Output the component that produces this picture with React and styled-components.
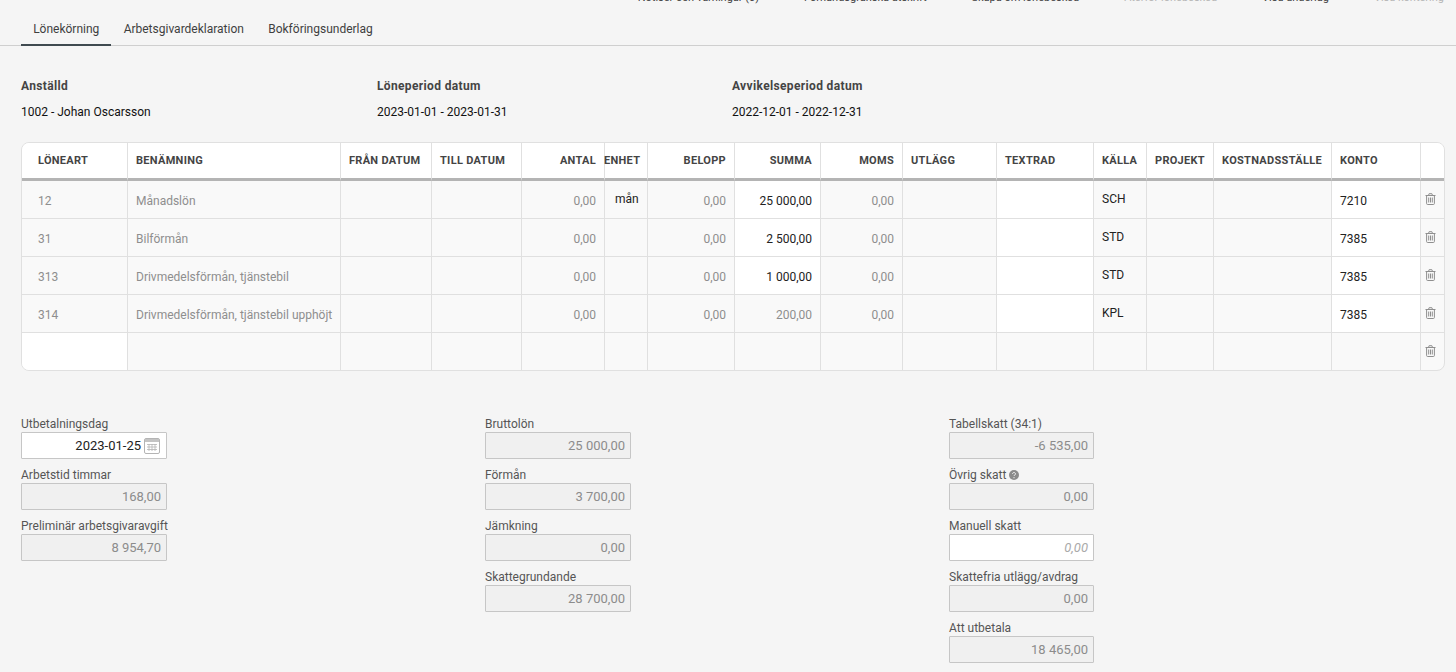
import React from "react";
import styled, { createGlobalStyle } from "styled-components";

const Global = createGlobalStyle`
  html, body {
    margin: 0;
    background: #f5f5f5;
    font-family: Roboto, "Liberation Sans", sans-serif;
  }
`;

const Page = styled.div`
  width: 1456px;
  height: 672px;
  overflow: hidden;
  background: #f5f5f5;
`;

const Toolbar = styled.div`
  height: 4px;
  overflow: hidden;
  display: flex;
  justify-content: flex-end;
  align-items: flex-end;
  gap: 45px;
  padding-right: 12px;
`;

const ToolItem = styled.span`
  font-size: 11px;
  line-height: 14px;
  white-space: nowrap;
  margin-bottom: -1px;
  color: ${(p) => (p.$off ? "#b5b5b5" : "#444")};
`;

const Tabs = styled.div`
  height: 42px;
  box-sizing: border-box;
  display: flex;
  padding: 0 0 0 21px;
  border-bottom: 1px solid #cfcfcf;
  margin-bottom: 33px;
`;

const Tab = styled.div`
  padding: 10px 12.15px 0;
  height: 42px;
  box-sizing: border-box;
  display: flex;
  align-items: center;
  font-size: 12px;
  color: #3f3f3f;
  border-bottom: 2px solid ${(p) => (p.$active ? "#3f4a50" : "transparent")};
`;

const Info = styled.div`
  display: grid;
  grid-template-columns: 356px 355px 300px;
  padding-left: 21px;
  height: 63px;
`;

const InfoLabel = styled.div`
  font-size: 12px;
  line-height: 14px;
  font-weight: 700;
  letter-spacing: 0.35px;
  color: #444;
  margin-bottom: 12px;
`;

const InfoValue = styled.div`
  font-size: 12px;
  line-height: 14px;
  color: #111;
`;

const Table = styled.table`
  margin-left: 21px;
  width: 1423px;
  table-layout: fixed;
  border-collapse: separate;
  border-spacing: 0;
  border: 1px solid #e0e0e0;
  border-radius: 8px;
  background: #f9f9f9;
  overflow: hidden;
`;

const Th = styled.th`
  height: 38px;
  padding: ${(p) => (p.$pad !== undefined ? `0 0 0 ${p.$pad}px` : "0 8px")};
  box-sizing: border-box;
  background: #fff;
  font-size: 11px;
  font-weight: 700;
  letter-spacing: 0.3px;
  color: #444;
  white-space: nowrap;
  text-indent: ${(p) => (p.$pad === 0 ? "-1px" : "0")};
  text-align: ${(p) => (p.$right ? "right" : "left")};
  border-right: 1px solid #e0e0e0;
  border-bottom: 3px solid #b4b4b4;
  &:last-child { border-right: 0; }
`;

const Td = styled.td`
  height: 38px;
  padding: ${(p) => (p.$raised ? "0 8px 2px" : "2px 8px 0")};
  padding-left: ${(p) => (p.$indent ? `${p.$indent}px` : "8px")};
  box-sizing: border-box;
  font-size: 12px;
  color: ${(p) => (p.$dark ? "#222" : "#8e8e8e")};
  background: ${(p) => (p.$white ? "#fff" : "transparent")};
  white-space: nowrap;
  overflow: hidden;
  text-align: ${(p) => (p.$right ? "right" : "left")};
  border-right: 1px solid #e0e0e0;
  border-bottom: 1px solid #e0e0e0;
  tr:last-child > & { border-bottom: 0; height: 37px; }
`;

const TrashCell = styled.td`
  height: 38px;
  padding: 0 5px 0 0;
  box-sizing: border-box;
  text-align: center;
  border-bottom: 1px solid #e0e0e0;
  tr:last-child > & { border-bottom: 0; height: 37px; }
`;

const Summary = styled.div`
  display: grid;
  grid-template-columns: 464px 464px 300px;
  padding-left: 21px;
  margin-top: 46px;
`;

const Column = styled.div`
  display: flex;
  flex-direction: column;
  gap: 9px;
  width: ${(p) => p.$width}px;
`;

const Label = styled.div`
  font-size: 12px;
  line-height: 14px;
  color: #555;
  white-space: nowrap;
  display: flex;
  align-items: center;
  gap: 3px;
`;

const InputBox = styled.div`
  height: 27px;
  box-sizing: border-box;
  margin-top: 1px;
  border: 1px solid #c6c6c6;
  border-radius: 1px;
  background: ${(p) => (p.$open ? "#fff" : "#f0f0f0")};
  display: flex;
  align-items: center;
  justify-content: flex-end;
  gap: 3px;
  padding: 0 ${(p) => (p.$date ? "6px" : "5px")} 0 4px;
  font-size: 13px;
  color: ${(p) => (p.$open ? "#222" : "#8c8c8c")};
`;

const Placeholder = styled.span`
  font-style: italic;
  font-size: 13px;
  color: #aaa;
`;

const columns = [
  { w: 106, t: "LÖNEART", pad: 16 },
  { w: 213, t: "BENÄMNING" },
  { w: 91, t: "FRÅN DATUM" },
  { w: 90, t: "TILL DATUM" },
  { w: 83, t: "ANTAL", right: true },
  { w: 43, t: "ENHET", pad: 0 },
  { w: 87, t: "BELOPP", right: true },
  { w: 86, t: "SUMMA", right: true },
  { w: 82, t: "MOMS", right: true },
  { w: 94, t: "UTLÄGG" },
  { w: 97, t: "TEXTRAD" },
  { w: 53, t: "KÄLLA" },
  { w: 67, t: "PROJEKT" },
  { w: 118, t: "KOSTNADSSTÄLLE" },
  { w: 89, t: "KONTO" },
  { w: 23, t: "" },
];

const rows = [
  { art: "12", name: "Månadslön", unit: "mån", sum: "25 000,00", src: "SCH", konto: "7210" },
  { art: "31", name: "Bilförmån", sum: "2 500,00", src: "STD", konto: "7385" },
  { art: "313", name: "Drivmedelsförmån, tjänstebil", sum: "1 000,00", src: "STD", konto: "7385" },
  { art: "314", name: "Drivmedelsförmån, tjänstebil upphöjt", sum: "200,00", muted: true, src: "KPL", konto: "7385" },
];

const TrashIcon = () => (
  <svg width="11" height="12" viewBox="0 0 11 12" fill="none" stroke="#8f8f8f" strokeWidth="1">
    <path d="M0.5 2.5h10M3.5 2.5l.6-1.8h2.8l.6 1.8M1.6 2.5v8a1 1 0 0 0 1 1h5.8a1 1 0 0 0 1-1v-8" />
    <path d="M3.7 4.5v5M5.5 4.5v5M7.3 4.5v5" />
  </svg>
);

const CalendarIcon = () => (
  <svg width="16" height="16" viewBox="0 0 16 16">
    <rect x="0.5" y="0.5" width="15" height="15" rx="1.5" fill="#fff" stroke="#b4b4b4" />
    <rect x="1" y="1" width="14" height="3" fill="#c4c4c4" />
    <path d="M3 6.5h10M3 9h10M3 11.5h10M5 6v7M8 6v7M11 6v7" stroke="#b4b4b4" strokeWidth="0.8" fill="none" />
  </svg>
);

const HelpIcon = () => (
  <svg width="10" height="10" viewBox="0 0 10 10">
    <circle cx="5" cy="5" r="5" fill="#8c8c8c" />
    <path d="M3.5 4c0-2 3-2 3 0 0 1-1.5 1-1.5 2" stroke="#f5f5f5" strokeWidth="1" fill="none" />
    <circle cx="5" cy="7.7" r="0.6" fill="#f5f5f5" />
  </svg>
);

const col1 = [
  { label: "Utbetalningsdag", value: "2023-01-25", open: true, date: true },
  { label: "Arbetstid timmar", value: "168,00" },
  { label: "Preliminär arbetsgivaravgift", value: "8 954,70" },
];
const col2 = [
  { label: "Bruttolön", value: "25 000,00" },
  { label: "Förmån", value: "3 700,00" },
  { label: "Jämkning", value: "0,00" },
  { label: "Skattegrundande", value: "28 700,00" },
];
const col3 = [
  { label: "Tabellskatt (34:1)", value: "-6 535,00" },
  { label: "Övrig skatt", value: "0,00", help: true },
  { label: "Manuell skatt", placeholder: "0,00", open: true },
  { label: "Skattefria utlägg/avdrag", value: "0,00" },
  { label: "Att utbetala", value: "18 465,00" },
];

const FieldColumn = ({ items, width }) => (
  <Column $width={width}>
    {items.map((f) => (
      <div key={f.label}>
        <Label>
          {f.label}
          {f.help && <HelpIcon />}
        </Label>
        <InputBox $open={f.open} $date={f.date}>
          {f.placeholder ? <Placeholder>{f.placeholder}</Placeholder> : f.value}
          {f.date && <CalendarIcon />}
        </InputBox>
      </div>
    ))}
  </Column>
);

const App = () => {
  return (
    <Page>
      <Global />
      <Toolbar>
        <ToolItem>Notiser och varningar (0)</ToolItem>
        <ToolItem>Förhandsgranska utskrift</ToolItem>
        <ToolItem>Skapa om lönebesked</ToolItem>
        <ToolItem $off>Återför lönebesked</ToolItem>
        <ToolItem>Visa underlag</ToolItem>
        <ToolItem $off>Visa kontering</ToolItem>
      </Toolbar>
      <Tabs>
        <Tab $active>Lönekörning</Tab>
        <Tab>Arbetsgivardeklaration</Tab>
        <Tab>Bokföringsunderlag</Tab>
      </Tabs>
      <Info>
        <div>
          <InfoLabel>Anställd</InfoLabel>
          <InfoValue>1002 - Johan Oscarsson</InfoValue>
        </div>
        <div>
          <InfoLabel>Löneperiod datum</InfoLabel>
          <InfoValue>2023-01-01 - 2023-01-31</InfoValue>
        </div>
        <div>
          <InfoLabel>Avvikelseperiod datum</InfoLabel>
          <InfoValue>2022-12-01 - 2022-12-31</InfoValue>
        </div>
      </Info>
      <Table>
        <colgroup>
          {columns.map((c) => (
            <col key={c.t} style={{ width: c.w }} />
          ))}
        </colgroup>
        <thead>
          <tr>
            {columns.map((c) => (
              <Th key={c.t} $right={c.right} $pad={c.pad}>
                {c.t}
              </Th>
            ))}
          </tr>
        </thead>
        <tbody>
          {rows.map((r) => (
            <tr key={r.art}>
              <Td $indent={16}>{r.art}</Td>
              <Td>{r.name}</Td>
              <Td />
              <Td />
              <Td $right>0,00</Td>
              <Td $dark $raised $indent={10}>{r.unit}</Td>
              <Td $right>0,00</Td>
              <Td $right $white={!r.muted} $dark={!r.muted}>{r.sum}</Td>
              <Td $right>0,00</Td>
              <Td />
              <Td $white />
              <Td $dark $raised>{r.src}</Td>
              <Td />
              <Td />
              <Td $white $dark>{r.konto}</Td>
              <TrashCell><TrashIcon /></TrashCell>
            </tr>
          ))}
          <tr>
            {columns.slice(0, 15).map((c, i) => (
              <Td key={c.t} $white={i === 0} />
            ))}
            <TrashCell><TrashIcon /></TrashCell>
          </tr>
        </tbody>
      </Table>
      <Summary>
        <FieldColumn items={col1} width={146} />
        <FieldColumn items={col2} width={146} />
        <FieldColumn items={col3} width={145} />
      </Summary>
    </Page>
  );
};

export default App;
